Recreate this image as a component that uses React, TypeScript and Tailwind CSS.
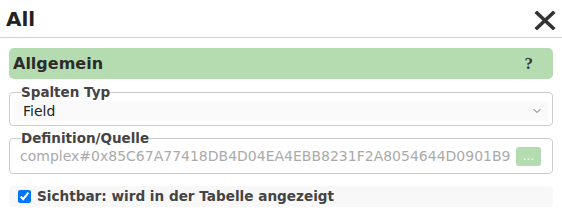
import { ChevronDown } from "lucide-react";

const CloseIcon = () => (
    <svg width="22" height="19" viewBox="0 0 22 19" className="text-[#333]">
        <path d="M3 2 L19 17 M19 2 L3 17" stroke="currentColor" strokeWidth="3.6" strokeLinecap="square" fill="none" />
    </svg>
);

const App = () => {
    return (
        <div className="w-[562px] h-[214px] overflow-hidden bg-white font-['DejaVu_Sans',sans-serif] text-[#333]">
            {/* Header */}
            <div className="flex h-[38px] items-center justify-between border-b border-[#cfcfcf] pl-[6px] pr-[6px]">
                <h1 className="text-[20px] font-bold leading-none text-[#222]">All</h1>
                <button className="mt-[3px] flex items-center">
                    <CloseIcon />
                </button>
            </div>

            <div className="flex flex-col px-[9px] pt-[10px]">
                {/* Section bar */}
                <div className="flex h-[31px] items-center justify-between rounded-[5px] bg-[#b5dcb0] pl-[4px] pr-[20px]">
                    <span className="text-[16px] font-bold text-[#2b2b2b]">Allgemein</span>
                    <span className="font-['Liberation_Serif',serif] text-[17px] font-bold text-[#333]">?</span>
                </div>

                {/* Spalten Typ */}
                <fieldset className="mt-[5px] h-[42px] rounded-[4px] border border-[#cccccc]">
                    <legend className="ml-[11px] text-[13.5px] font-bold leading-[16px] text-[#444]">Spalten Typ</legend>
                    <div className="mx-[4px] mt-[1px] flex h-[20px] items-center justify-between bg-[#fafafa] pl-[9px] pr-[5px]">
                        <span className="text-[14px] text-[#222]">Field</span>
                        <ChevronDown className="h-[12px] w-[12px] text-[#444]" strokeWidth={1.6} />
                    </div>
                </fieldset>

                {/* Definition/Quelle */}
                <fieldset className="mt-[4px] h-[44px] rounded-[4px] border border-[#cccccc]">
                    <legend className="ml-[11px] text-[13.5px] font-bold leading-[16px] text-[#444]">Definition/Quelle</legend>
                    <div className="flex items-center pl-[10px] pr-[11px]">
                        <span className="min-w-0 flex-1 overflow-hidden whitespace-nowrap text-[14px] leading-[20px] text-[#aaa]">
                            complex#0x85C67A77418DB4D04EA4EBB8231F2A8054644D0901B9
                        </span>
                        <button className="flex h-[19px] w-[25px] shrink-0 items-center justify-center rounded-[3px] bg-[#b5dcb0] text-[12px] leading-none text-white">
                            ...
                        </button>
                    </div>
                </fieldset>

                {/* Sichtbar */}
                <label className="mt-[12px] flex h-[21px] items-center gap-[6px] rounded-[4px] bg-[#f8f8f8] pl-[9px]">
                    <input type="checkbox" defaultChecked className="h-[13px] w-[13px]" />
                    <span className="text-[13.6px] font-bold text-[#444]">Sichtbar: wird in der Tabelle angezeigt</span>
                </label>
            </div>
        </div>
    );
};

export default App;
